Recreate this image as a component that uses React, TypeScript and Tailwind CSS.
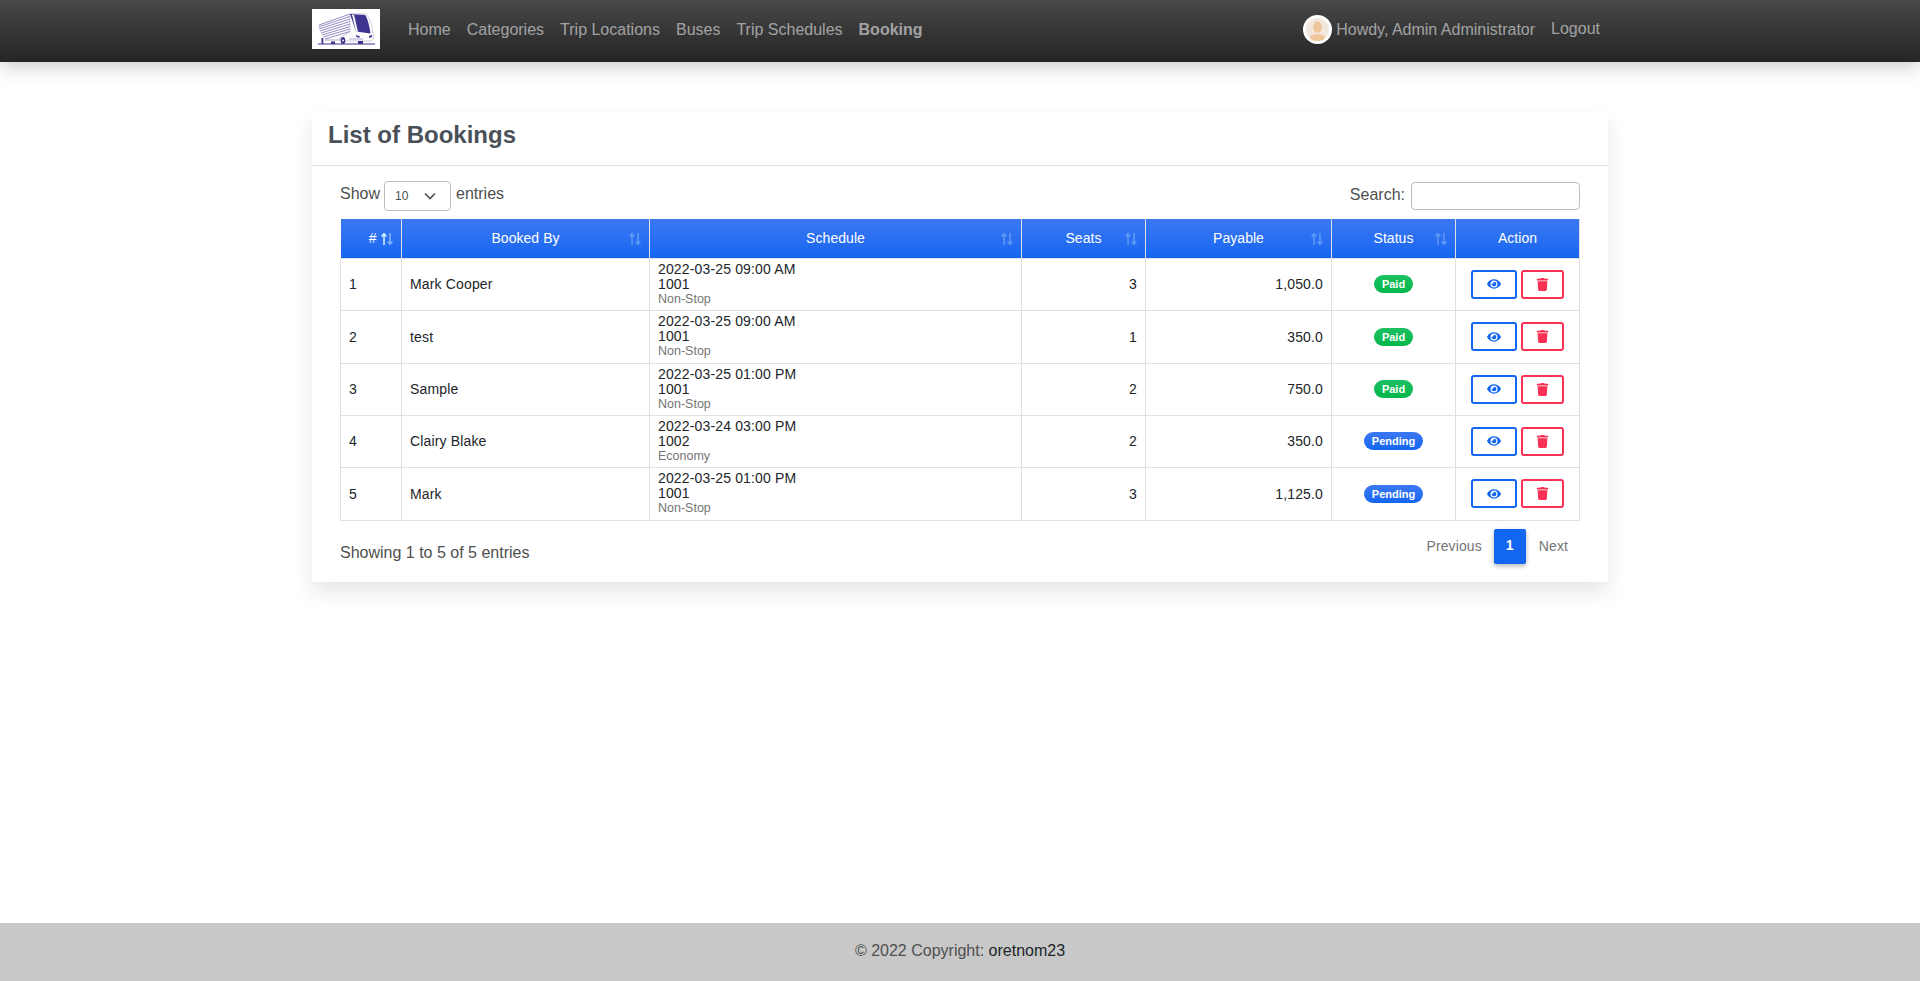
import { FaEye, FaTrash } from "react-icons/fa";

const rows = [
  { id: 1, by: "Mark Cooper", date: "2022-03-25 09:00 AM", code: "1001", type: "Non-Stop", seats: 3, pay: "1,050.0", status: "Paid", h: "h-[52px]" },
  { id: 2, by: "test", date: "2022-03-25 09:00 AM", code: "1001", type: "Non-Stop", seats: 1, pay: "350.0", status: "Paid", h: "h-[53px]" },
  { id: 3, by: "Sample", date: "2022-03-25 01:00 PM", code: "1001", type: "Non-Stop", seats: 2, pay: "750.0", status: "Paid", h: "h-[52px]" },
  { id: 4, by: "Clairy Blake", date: "2022-03-24 03:00 PM", code: "1002", type: "Economy", seats: 2, pay: "350.0", status: "Pending", h: "h-[52px]" },
  { id: 5, by: "Mark", date: "2022-03-25 01:00 PM", code: "1001", type: "Non-Stop", seats: 3, pay: "1,125.0", status: "Pending", h: "h-[53px]" },
];

function Sort({ active }: { active?: boolean }) {
  return (
    <svg viewBox="0 0 14 14" className="absolute right-[7px] top-[13px] h-[14px] w-[14px]" fill="none" strokeWidth="1.6">
      <path d="M4 13V2M1.6 4.6 4 1.8l2.4 2.8" stroke={active ? "#c8f0ff" : "#5f98f5"} />
      <path d="M10 1v11M7.6 9.4 10 12.2l2.4-2.8" stroke={active ? "#7fb0f8" : "#5f98f5"} />
    </svg>
  );
}

function Logo() {
  return (
    <svg viewBox="0 0 68 40" className="h-10 w-[68px] bg-white">
      <g stroke="#7570b3" strokeWidth="0.8">
        <path d="M7 16 38 5M6.5 18 38 7.5M7 20 38 10M8 22 38 12.5M9 24 38 15M10 26 38 17.5M11 28 38 20M13 30 38 22.5" />
      </g>
      <path d="M38 4.5 53 5c3 1 5 6 7 13l1.500 12-2 2H30l-3-3 11-6Z" fill="#fff" stroke="#a9a6cf" strokeWidth="0.6" />
      <path d="M38 5 53 6c2.500 3 4.500 11 5.500 18.500L44 22.500Z" fill="#3d3590" />
      <path d="M40 5.500 42 5.800 46 23l-2-.4Z" fill="#fff" />
      <path d="M44 26l4 1.500-1 1.500-3-1.500ZM57 27l3-1v2l-3 1Z" fill="#3d3590" />
      <path d="M13 31h18M37 30h14" stroke="#a9a6cf" strokeWidth="1" />
      <path d="M6 35h57" stroke="#3d3590" strokeWidth="1.200" />
      <ellipse cx="31" cy="31.500" rx="2.300" ry="3.600" fill="#3d3590" />
      <circle cx="31" cy="31.500" r="0.900" fill="#fff" />
      <rect x="9.500" y="29" width="1.800" height="6" fill="#3d3590" />
      <rect x="19" y="32.500" width="4" height="2.500" fill="#3d3590" />
      <rect x="46" y="32" width="5" height="3" fill="#3d3590" />
    </svg>
  );
}

function Avatar() {
  return (
    <span className="flex h-[29px] w-[29px] items-center justify-center rounded-full bg-white">
      <svg viewBox="0 0 24 24" className="h-[23px] w-[23px] rounded-full bg-[#f1e7dc]">
        <ellipse cx="12" cy="9.500" rx="4.600" ry="6" fill="#f0c79a" />
        <path d="M3 24c0-6 5-7 9-7s9 1 9 7Z" fill="#f0c79a" />
      </svg>
    </span>
  );
}

export default function App() {
  const navs = ["Home", "Categories", "Trip Locations", "Buses", "Trip Schedules"];
  const th = "relative h-[39px] border-r border-[#e0e0e0] p-0 text-center align-middle text-[14px] font-normal tracking-[0.05px] text-white";
  const td = "border border-[#e0e0e0] px-2 text-[14px] leading-[16px] tracking-[0.15px] text-[#212529]";
  return (
    <div className="flex min-h-screen flex-col bg-white font-['Liberation_Sans',Arial,sans-serif] text-[#4f4f4f]">
      <nav className="h-[62px] bg-gradient-to-b from-[#484848] to-[#252525] shadow-[0_4px_18px_rgba(0,0,0,0.22)]">
        <div className="mx-auto flex h-full w-[1320px] items-center px-3">
          <div className="mb-[4px]">
            <Logo />
          </div>
          <ul className="mb-[2px] ml-[28px] flex gap-[16px] text-[16px] text-[rgba(255,255,255,0.55)]">
            {navs.map((n) => (
              <li key={n}>{n}</li>
            ))}
            <li className="font-bold">Booking</li>
          </ul>
          <div className="mb-[3px] ml-auto mr-[8px] flex items-center text-[16px] text-[rgba(255,255,255,0.55)]">
            <Avatar />
            <span className="ml-[4px]">Howdy, Admin Administrator</span>
            <span className="mb-[2px] ml-[16px]">Logout</span>
          </div>
        </div>
      </nav>

      <main className="mx-auto mt-[50px] w-[1320px] px-3">
        <section className="h-[470px] bg-white shadow-[0_10px_20px_rgba(0,0,0,0.1)]">
          <header className="flex h-[54px] items-center border-b border-[#e0e0e0] px-4 pb-[8px]">
            <h1 className="text-[24px] font-bold leading-none text-[#495057]">List of Bookings</h1>
          </header>
          <div className="px-7">
            <div className="flex h-[53px] items-center justify-between pt-[7px] text-[16px]">
              <div className="flex items-center">
                <span className="mb-[4px]">Show</span>
                <div className="ml-[4px] mr-[5px] flex h-[30px] w-[67px] items-center justify-between rounded border border-[#bdbdbd] pl-[10px] pr-[14px] text-[12px]">
                  <span>10</span>
                  <svg viewBox="0 0 12 8" className="h-[8px] w-[12px]" fill="none" stroke="#4f4f4f" strokeWidth="1.6">
                    <path d="m1 1.500 5 5 5-5" />
                  </svg>
                </div>
                <span className="mb-[4px]">entries</span>
              </div>
              <div className="flex items-center">
                <span className="mb-[3px]">Search:</span>
                <div className="ml-[6px] h-[28px] w-[169px] rounded border border-[#bdbdbd]" />
              </div>
            </div>
            <table className="w-[1239px] table-fixed border-collapse">
              <colgroup>
                <col className="w-[61px]" />
                <col className="w-[248px]" />
                <col className="w-[372px]" />
                <col className="w-[124px]" />
                <col className="w-[186px]" />
                <col className="w-[124px]" />
                <col className="w-[124px]" />
              </colgroup>
              <thead>
                <tr className="bg-gradient-to-b from-[#3b78f2] to-[#1266f1]">
                  <th className={th}>
                    <span className="relative left-[2px]">#</span>
                    <Sort active />
                  </th>
                  <th className={th}>
                    Booked By
                    <Sort />
                  </th>
                  <th className={th}>
                    Schedule
                    <Sort />
                  </th>
                  <th className={th}>
                    Seats
                    <Sort />
                  </th>
                  <th className={th}>
                    Payable
                    <Sort />
                  </th>
                  <th className={th}>
                    Status
                    <Sort />
                  </th>
                  <th className={th}>Action</th>
                </tr>
              </thead>
              <tbody>
                {rows.map((r) => (
                  <tr key={r.id} className={r.h}>
                    <td className={td}>{r.id}</td>
                    <td className={td}>{r.by}</td>
                    <td className={td}>
                      <div className="leading-[15px]">{r.date}</div>
                      <div className="leading-[14px]">{r.code}</div>
                      <div className="text-[12.5px] leading-[16px] tracking-normal text-[#757575]">{r.type}</div>
                    </td>
                    <td className={`${td} text-right`}>{r.seats}</td>
                    <td className={`${td} text-right`}>{r.pay}</td>
                    <td className={`${td} text-center`}>
                      <span
                        className={`inline-block rounded-full bg-gradient-to-b px-[8px] py-[3px] align-middle text-[11px] font-bold leading-[12px] tracking-normal text-white ${
                          r.status === "Paid" ? "from-[#1cc062] to-[#00b74a]" : "from-[#3b78f2] to-[#1266f1]"
                        }`}
                      >
                        {r.status}
                      </span>
                    </td>
                    <td className={td}>
                      <div className="flex justify-center gap-[4px]">
                        <button className="flex h-[29px] w-[46px] items-center justify-center rounded-[3px] border-2 border-[#1266f1] text-[#1266f1]">
                          <FaEye className="text-[14px]" />
                        </button>
                        <button className="flex h-[29px] w-[43px] items-center justify-center rounded-[3px] border-2 border-[#f93154] text-[#f93154]">
                          <FaTrash className="text-[13px]" />
                        </button>
                      </div>
                    </td>
                  </tr>
                ))}
              </tbody>
            </table>
            <div className="flex items-start justify-between">
              <div className="mt-[20px] text-[16px]">Showing 1 to 5 of 5 entries</div>
              <div className="mr-[12px] mt-[8px] flex items-center text-[14px] tracking-[0.1px] text-[#757575]">
                <span>Previous</span>
                <span className="ml-[12px] mr-[13px] flex h-[35px] w-[32px] items-center justify-center rounded-[2px] bg-[#1266f1] pb-[1px] font-bold text-white shadow-[0_2px_5px_rgba(0,0,0,0.3)]">
                  1
                </span>
                <span>Next</span>
              </div>
            </div>
          </div>
        </section>
      </main>

      <footer className="mt-auto flex h-[58px] items-center justify-center bg-[#c8c8c8] pb-[3px] text-[16px]">
        <span>
          © 2022 Copyright: <span className="text-[#212529]">oretnom23</span>
        </span>
      </footer>
    </div>
  );
}
